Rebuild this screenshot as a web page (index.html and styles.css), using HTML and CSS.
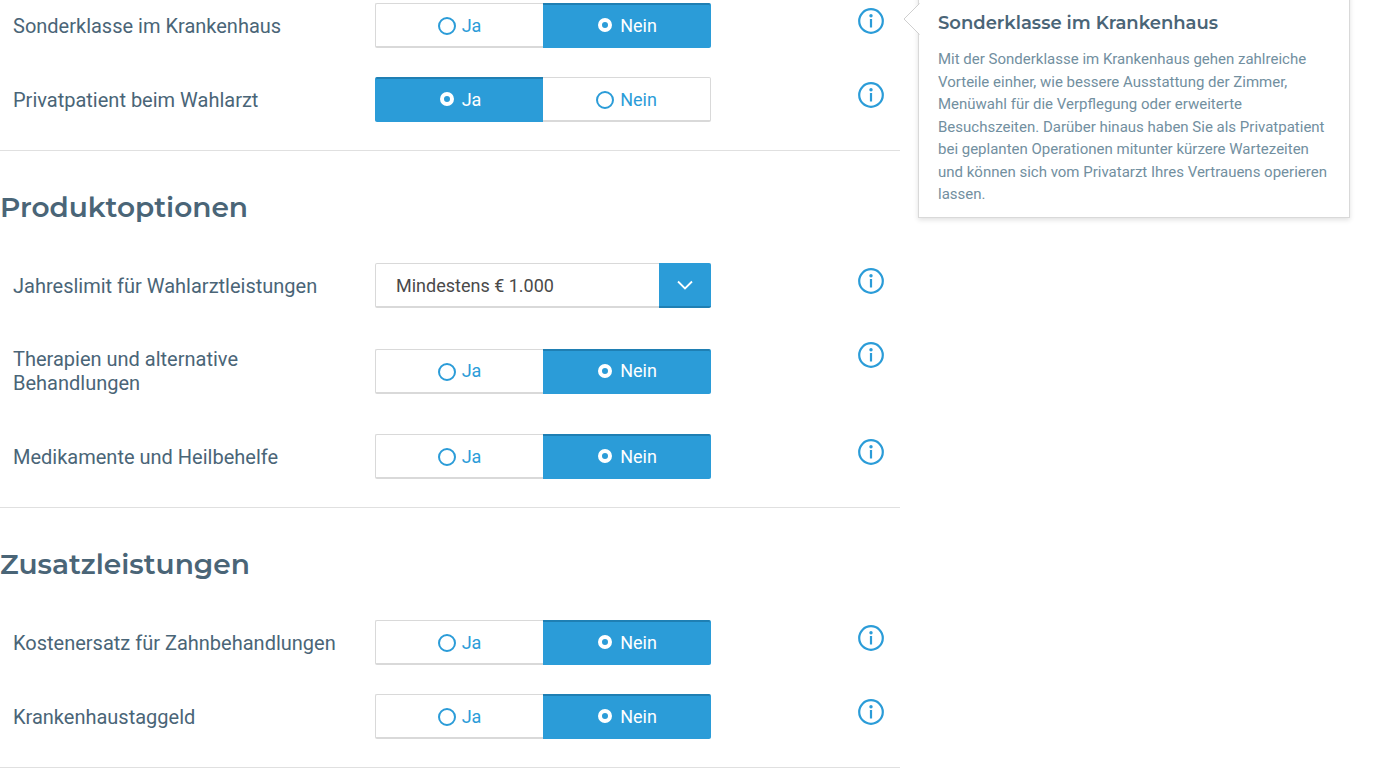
FILE: index.html
```
<!DOCTYPE html>
<html lang="de">
<head>
    <meta charset="UTF-8">
    <meta name="viewport" content="width=device-width, initial-scale=1.0">
    <title>Produktoptionen</title>
    <link rel="stylesheet" href="styles.css">
</head>
<body>
    <!-- shared icons -->
    <svg class="sprite" aria-hidden="true">
        <symbol id="info" viewBox="0 0 26 26">
            <circle cx="13" cy="13" r="11.8" fill="none" stroke="currentColor" stroke-width="2.200"/>
            <circle cx="13" cy="7.800" r="1.700" fill="currentColor"/>
            <path d="M13 11v8.500" stroke="currentColor" stroke-width="2.200"/>
        </symbol>
    </svg>

    <div class="page">
        <form class="options">
            <section class="group">
                <div class="row">
                    <span class="label" id="l-sonderklasse">Sonderklasse im Krankenhaus</span>
                    <div class="toggle" role="radiogroup" aria-labelledby="l-sonderklasse">
                        <label><input type="radio" name="sonderklasse" value="ja">Ja</label>
                        <label><input type="radio" name="sonderklasse" value="nein" checked>Nein</label>
                    </div>
                    <button type="button" class="info" aria-label="Info"><svg><use href="#info"/></svg></button>
                </div>
                <div class="row">
                    <span class="label" id="l-wahlarzt">Privatpatient beim Wahlarzt</span>
                    <div class="toggle" role="radiogroup" aria-labelledby="l-wahlarzt">
                        <label><input type="radio" name="wahlarzt" value="ja" checked>Ja</label>
                        <label><input type="radio" name="wahlarzt" value="nein">Nein</label>
                    </div>
                    <button type="button" class="info" aria-label="Info"><svg><use href="#info"/></svg></button>
                </div>
            </section>

            <section class="group">
                <h2>Produktoptionen</h2>
                <div class="row">
                    <label class="label" for="limit">Jahreslimit für Wahlarztleistungen</label>
                    <div class="select">
                        <select id="limit" name="limit">
                            <option>Mindestens € 1.000</option>
                        </select>
                        <span class="select-arrow">
                            <svg width="16" height="10" viewBox="0 0 16 10"><path d="M1 1.500l7 7 7-7" fill="none" stroke="#fff" stroke-width="1.800"/></svg>
                        </span>
                    </div>
                    <button type="button" class="info" aria-label="Info"><svg><use href="#info"/></svg></button>
                </div>
                <div class="row">
                    <span class="label" id="l-therapien">Therapien und alternative Behandlungen</span>
                    <div class="toggle" role="radiogroup" aria-labelledby="l-therapien">
                        <label><input type="radio" name="therapien" value="ja">Ja</label>
                        <label><input type="radio" name="therapien" value="nein" checked>Nein</label>
                    </div>
                    <button type="button" class="info" aria-label="Info"><svg><use href="#info"/></svg></button>
                </div>
                <div class="row">
                    <span class="label" id="l-medikamente">Medikamente und Heilbehelfe</span>
                    <div class="toggle" role="radiogroup" aria-labelledby="l-medikamente">
                        <label><input type="radio" name="medikamente" value="ja">Ja</label>
                        <label><input type="radio" name="medikamente" value="nein" checked>Nein</label>
                    </div>
                    <button type="button" class="info" aria-label="Info"><svg><use href="#info"/></svg></button>
                </div>
            </section>

            <section class="group">
                <h2>Zusatzleistungen</h2>
                <div class="row">
                    <span class="label" id="l-zahn">Kostenersatz für Zahnbehandlungen</span>
                    <div class="toggle" role="radiogroup" aria-labelledby="l-zahn">
                        <label><input type="radio" name="zahn" value="ja">Ja</label>
                        <label><input type="radio" name="zahn" value="nein" checked>Nein</label>
                    </div>
                    <button type="button" class="info" aria-label="Info"><svg><use href="#info"/></svg></button>
                </div>
                <div class="row">
                    <span class="label" id="l-taggeld">Krankenhaustaggeld</span>
                    <div class="toggle" role="radiogroup" aria-labelledby="l-taggeld">
                        <label><input type="radio" name="taggeld" value="ja">Ja</label>
                        <label><input type="radio" name="taggeld" value="nein" checked>Nein</label>
                    </div>
                    <button type="button" class="info" aria-label="Info"><svg><use href="#info"/></svg></button>
                </div>
            </section>
        </form>

        <aside class="tooltip">
            <svg class="tooltip-arrow" width="17" height="32" viewBox="0 0 17 32"><path d="M16.500 0.500L1 16l15.500 15.500" fill="#fff" stroke="#cfcfcf"/></svg>
            <h3>Sonderklasse im Krankenhaus</h3>
            <p>Mit der Sonderklasse im Krankenhaus gehen zahlreiche Vorteile einher, wie bessere Ausstattung der Zimmer, Menüwahl für die Verpflegung oder erweiterte Besuchszeiten. Darüber hinaus haben Sie als Privatpatient bei geplanten Operationen mitunter kürzere Wartezeiten und können sich vom Privatarzt Ihres Vertrauens operieren lassen.</p>
        </aside>
    </div>
</body>
</html>
```
FILE: styles.css
```
* {
    box-sizing: border-box;
    margin: 0;
    padding: 0;
}
body {
    font-family: Roboto, sans-serif;
    color: #4a6577;
    background-color: #fff;
}
.sprite {
    display: none;
}
.page {
    display: grid;
    grid-template-columns: minmax(0, 1fr) 432px;
    gap: 18px;
    align-items: start;
    margin-top: -12px;
    padding-right: 27px;
}

/* option groups */
.group {
    padding-bottom: 14px;
    border-bottom: 1px solid #e0e0e0;
}
h2 {
    padding: 38px 0 23px;
    font-family: Montserrat, "Open Sans", sans-serif;
    font-size: 28px;
    font-weight: 600;
    line-height: 36px;
}
.row {
    display: grid;
    grid-template-columns: 362fr 336fr 173fr;
    align-items: center;
    padding: 15px 16px 14px 13px;
}
.label {
    padding: 10px 24px 10px 0;
    font-size: 20px;
    line-height: 24px;
}

/* ja / nein */
.toggle {
    display: flex;
    height: 45px;
}
.toggle label {
    flex: 1;
    display: flex;
    align-items: center;
    justify-content: center;
    gap: 6px;
    border: 1px solid #d9d9d9;
    border-bottom-width: 2px;
    color: #2b9cd8;
    font-size: 18px;
    cursor: pointer;
}
.toggle label:first-child {
    border-right: 0;
    border-radius: 2px 0 0 2px;
}
.toggle label:last-child {
    border-left: 0;
    border-radius: 0 2px 2px 0;
}
.toggle input {
    appearance: none;
    width: 18px;
    height: 18px;
    margin-top: 2px;
    border: 2px solid #2b9cd8;
    border-radius: 50%;
}
.toggle label:has(input:checked) {
    border-color: #1f7fb3 #2b9cd8 #2b9cd8;
    box-shadow: inset 0 1px #1f7fb3;
    background-color: #2b9cd8;
    color: #fff;
}
.toggle input:checked {
    width: 14px;
    height: 14px;
    margin: 0 2px;
    border: 4px solid #fff;
}

.select {
    position: relative;
    height: 45px;
}
.select select {
    appearance: none;
    width: 100%;
    height: 100%;
    padding: 0 60px 0 20px;
    border: 1px solid #d9d9d9;
    border-bottom-width: 2px;
    border-radius: 2px;
    background-color: #fff;
    color: #4a4a4a;
    font-family: inherit;
    font-size: 18px;
}
.select-arrow {
    position: absolute;
    top: 0;
    right: 0;
    bottom: 0;
    width: 52px;
    display: flex;
    align-items: center;
    justify-content: center;
    border-bottom: 2px solid #1f7fb3;
    border-radius: 0 2px 2px 0;
    background-color: #2b9cd8;
    pointer-events: none;
}

.info {
    align-self: start;
    justify-self: end;
    width: 26px;
    height: 26px;
    margin-top: 5px;
    border: 0;
    background: none;
    color: #2b9cd8;
    cursor: pointer;
}
.info svg {
    display: block;
    width: 26px;
    height: 26px;
}

.tooltip {
    position: relative;
    padding: 22px 19px 11px;
    border: 1px solid #d9d9d9;
    box-shadow: 0 2px 5px rgba(0, 0, 0, 0.12);
    background-color: #fff;
}
.tooltip-arrow {
    position: absolute;
    top: 14px;
    left: -16px;
}
.tooltip h3 {
    margin-bottom: 13px;
    font-family: Montserrat, "Open Sans", sans-serif;
    font-size: 18px;
    font-weight: 600;
    line-height: 24px;
}
.tooltip p {
    color: #728f9f;
    font-size: 15px;
    line-height: 1.5;
}
```
